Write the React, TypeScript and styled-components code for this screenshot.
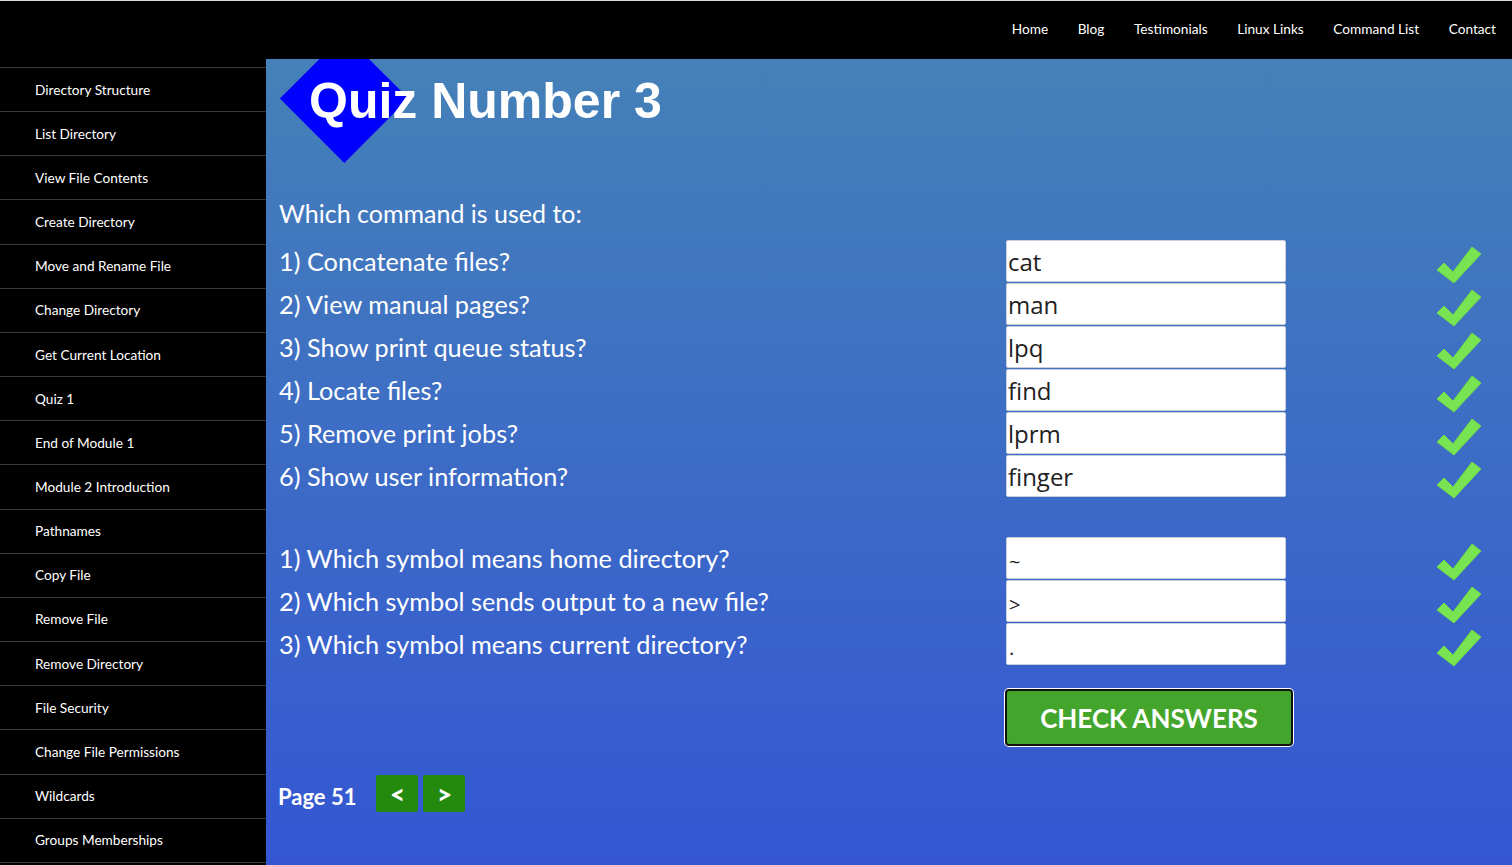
import React from "react";
import styled, { createGlobalStyle } from "styled-components";

const GlobalStyle = createGlobalStyle`
  html, body { margin: 0; padding: 0; background: #000; }
  body { font-family: Lato, "Open Sans", sans-serif; }
  * { box-sizing: border-box; }
`;

const Page = styled.div`
  display: flex;
  flex-direction: column;
  width: 1512px;
  height: 865px;
  overflow: hidden;
`;

const Header = styled.header`
  height: 59px;
  flex: none;
  background: #000;
  border-top: 1px solid #d8d8d8;
  display: flex;
  justify-content: flex-end;
  align-items: center;
  padding-right: 16px;
  gap: 29.6px;
`;

const NavLink = styled.a`
  font-family: Lato, sans-serif;
  font-size: 13.65px;
  color: #fff;
  text-decoration: none;
  margin-top: -3px;
`;

const Body = styled.div`
  flex: 1;
  display: flex;
  min-height: 0;
`;

const Sidebar = styled.nav`
  width: 266px;
  flex: none;
  background: #000;
  padding-top: 8px;
  display: flex;
  flex-direction: column;
`;

const SideItem = styled.a`
  display: flex;
  align-items: center;
  height: 44.17px;
  padding-left: 35px;
  border-bottom: 1px solid #383838;
  font-family: Lato, sans-serif;
  font-size: 13.65px;
  color: #fff;
  text-decoration: none;
  &:first-child { border-top: 1px solid #383838; height: 45.17px; }
`;

const Main = styled.main`
  position: relative;
  flex: 1;
  overflow: hidden;
  background: linear-gradient(180deg, #4581b8 0%, #3456d3 100%);
  padding: 0 13px;
  color: #fff;
`;

const Diamond = styled.div`
  position: absolute;
  left: 33px;
  top: -6px;
  width: 90.5px;
  height: 90.5px;
  background: #0000ff;
  transform: rotate(45deg);
`;

const Title = styled.h1`
  position: relative;
  margin: 17px 0 0 30px;
  font-family: "Liberation Sans", Arial, sans-serif;
  font-weight: bold;
  font-size: 50px;
  line-height: 50px;
  color: #fff;
`;

const Lead = styled.div`
  margin-top: 63px;
  margin-bottom: 3px;
  height: 48px;
  line-height: 48px;
  font-family: Lato, sans-serif;
  font-size: 25px;
`;

const Group = styled.div<{ $gap?: number }>`
  display: grid;
  grid-template-columns: 727px 280px 150px 46px;
  grid-auto-rows: 43px;
  margin-top: ${(p) => p.$gap ?? 0}px;
`;

const Question = styled.div`
  height: 43px;
  display: flex;
  align-items: center;
  font-family: Lato, sans-serif;
  font-size: 25.3px;
  color: #fff;
  padding-bottom: 1px;
`;

const Answer = styled.input<{ $small?: boolean }>`
  height: 42px;
  width: 280px;
  border: 1px solid #c9cfdc;
  border-radius: 2px;
  background: #fff;
  padding: ${(p) => (p.$small ? "6px 2px 0" : "0 1px")};
  font-family: "Open Sans", sans-serif;
  font-size: ${(p) => (p.$small ? "20px" : "24px")};
  color: #222;
  outline: none;
`;

const CheckCell = styled.div`
  grid-column: 4;
  height: 43px;
  padding-top: 6px;
  svg { display: block; }
`;

const CheckIcon = () => (
  <svg width="46" height="38" viewBox="0 0 46 38">
    <polygon
      points="1,24 8,17 17,26 36,1 45,8 18,37"
      fill="#79e452"
      stroke="#6ed848"
      strokeWidth="1"
      strokeLinejoin="round"
    />
  </svg>
);

const ButtonRow = styled.div`
  display: grid;
  grid-template-columns: 727px auto;
  margin-top: 23px;
`;

const CheckButton = styled.button`
  grid-column: 2;
  margin-left: -1px;
  width: 288px;
  height: 57px;
  background: #44a52c;
  border: 2px solid #111;
  border-radius: 4px;
  box-shadow: 0 0 0 1px #fff;
  color: #fff;
  font-family: Lato, sans-serif;
  font-weight: bold;
  font-size: 26px;
  text-transform: uppercase;
  cursor: pointer;
`;

const Pager = styled.div`
  display: flex;
  align-items: center;
  margin-top: 29px;
  margin-left: -1px;
  gap: 5px;
`;

const PageLabel = styled.span`
  font-family: Lato, sans-serif;
  font-weight: bold;
  font-size: 22px;
  color: #fff;
  margin-right: 15px;
  margin-top: 6px;
`;

const PageBtn = styled.button`
  width: 42px;
  height: 37px;
  border: none;
  border-radius: 2px;
  background: #238a0e;
  color: #fff;
  font-family: Lato, sans-serif;
  font-weight: 900;
  font-size: 26px;
  line-height: 1;
  padding: 0;
  cursor: pointer;
`;

const navItems = ["Home", "Blog", "Testimonials", "Linux Links", "Command List", "Contact"];

const sideItems = [
  "Directory Structure",
  "List Directory",
  "View File Contents",
  "Create Directory",
  "Move and Rename File",
  "Change Directory",
  "Get Current Location",
  "Quiz 1",
  "End of Module 1",
  "Module 2 Introduction",
  "Pathnames",
  "Copy File",
  "Remove File",
  "Remove Directory",
  "File Security",
  "Change File Permissions",
  "Wildcards",
  "Groups Memberships",
];

const group1 = [
  ["1) Concatenate files?", "cat"],
  ["2) View manual pages?", "man"],
  ["3) Show print queue status?", "lpq"],
  ["4) Locate files?", "find"],
  ["5) Remove print jobs?", "lprm"],
  ["6) Show user information?", "finger"],
];

const group2 = [
  ["1) Which symbol means home directory?", "~"],
  ["2) Which symbol sends output to a new file?", ">"],
  ["3) Which symbol means current directory?", "."],
];

export default function App() {
  return (
    <Page>
      <GlobalStyle />
      <Header>
        {navItems.map((n) => (
          <NavLink key={n} href="#">
            {n}
          </NavLink>
        ))}
      </Header>
      <Body>
        <Sidebar>
          {sideItems.map((s) => (
            <SideItem key={s} href="#">
              {s}
            </SideItem>
          ))}
        </Sidebar>
        <Main>
          <Diamond />
          <Title>Quiz Number 3</Title>
          <Lead>Which command is used to:</Lead>
          <Group>
            {group1.map(([q, a]) => (
              <React.Fragment key={q}>
                <Question>{q}</Question>
                <Answer defaultValue={a} />
                <CheckCell>
                  <CheckIcon />
                </CheckCell>
              </React.Fragment>
            ))}
          </Group>
          <Group $gap={39}>
            {group2.map(([q, a]) => (
              <React.Fragment key={q}>
                <Question>{q}</Question>
                <Answer $small defaultValue={a} />
                <CheckCell>
                  <CheckIcon />
                </CheckCell>
              </React.Fragment>
            ))}
          </Group>
          <ButtonRow>
            <CheckButton>Check Answers</CheckButton>
          </ButtonRow>
          <Pager>
            <PageLabel>Page 51</PageLabel>
            <PageBtn>&lt;</PageBtn>
            <PageBtn>&gt;</PageBtn>
          </Pager>
        </Main>
      </Body>
    </Page>
  );
}
